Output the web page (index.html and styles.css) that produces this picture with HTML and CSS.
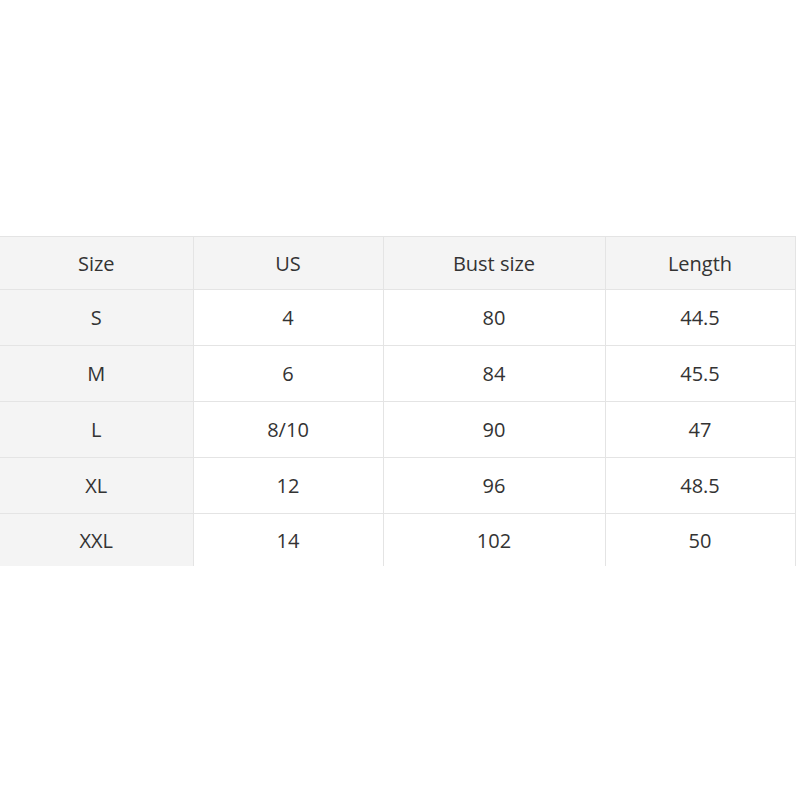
FILE: index.html
```html
<!DOCTYPE html>
<html>
<head>
<meta charset="utf-8">
<link rel="stylesheet" href="styles.css">
</head>
<body>
<div class="page">
<table class="sizes">
  <colgroup>
    <col class="c1"><col class="c2"><col class="c3"><col class="c4">
  </colgroup>
  <thead>
    <tr><th>Size</th><th>US</th><th>Bust size</th><th>Length</th></tr>
  </thead>
  <tbody>
    <tr><th>S</th><td>4</td><td>80</td><td>44.5</td></tr>
    <tr><th>M</th><td>6</td><td>84</td><td>45.5</td></tr>
    <tr><th>L</th><td>8/10</td><td>90</td><td>47</td></tr>
    <tr><th>XL</th><td>12</td><td>96</td><td>48.5</td></tr>
    <tr class="last"><th>XXL</th><td>14</td><td>102</td><td>50</td></tr>
  </tbody>
</table>
</div>
</body>
</html>
```

FILE: styles.css
```css
html, body {
  margin: 0;
  padding: 0;
  background: #ffffff;
}
.page {
  padding-top: 236px;
}
.sizes {
  border-collapse: collapse;
  table-layout: fixed;
  width: 795px;
  font-family: "Open Sans", "Noto Sans", sans-serif;
  font-size: 20px;
  color: #333333;
}
.c1 { width: 193px; }
.c2 { width: 190px; }
.c3 { width: 222px; }
.c4 { width: 190px; }
.sizes th,
.sizes td {
  height: 55px;
  padding: 0;
  text-align: center;
  vertical-align: middle;
  font-weight: normal;
  border: 1px solid #e4e4e4;
}
.sizes thead th {
  background: #f4f4f4;
  height: 52px;
}
.sizes tbody th {
  background: #f4f4f4;
}
.sizes td {
  background: #ffffff;
}
.sizes tr > :first-child { border-left: none; }
.sizes tr.last > * {
  border-bottom: none;
  height: 52px;
}
```
